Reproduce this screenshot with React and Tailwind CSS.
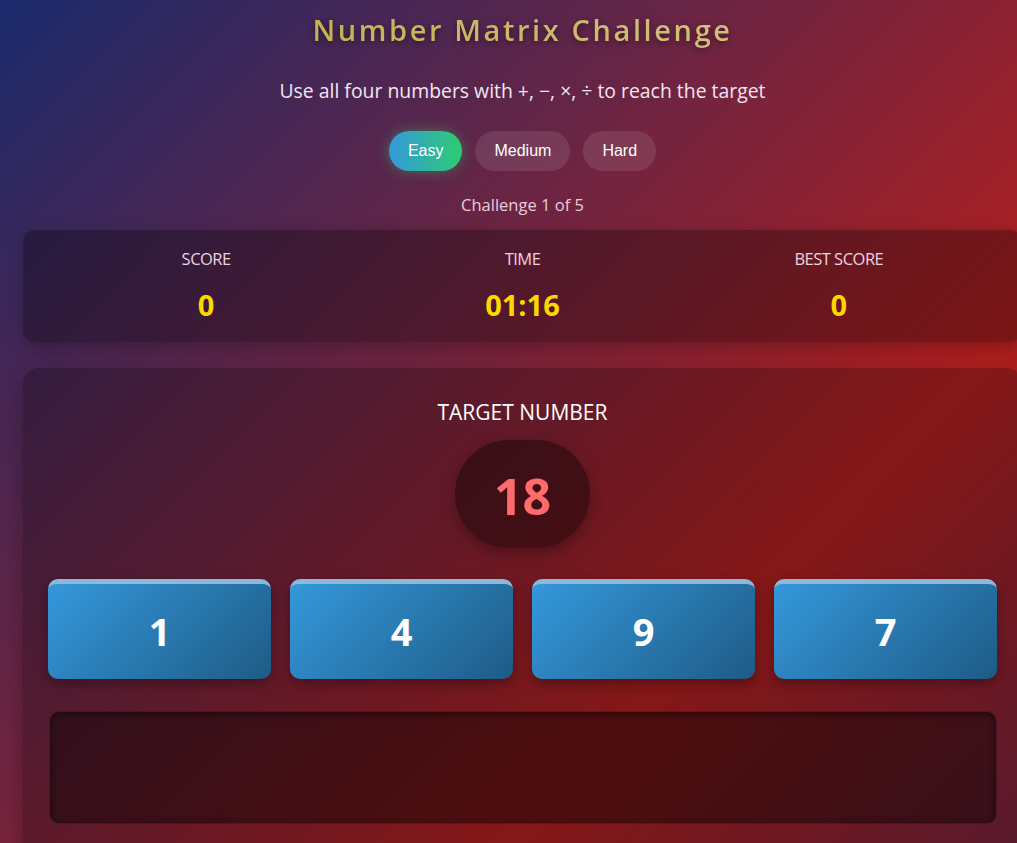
const stats = [
  { label: "SCORE", value: "0" },
  { label: "TIME", value: "01:16" },
  { label: "BEST SCORE", value: "0" },
];

const numbers = [1, 4, 9, 7];

export default function App() {
  return (
    <div className="h-screen overflow-hidden bg-[linear-gradient(135deg,#1a2a6c,#b21f1f,#1a2a6c)] bg-[length:100%_1683px] bg-no-repeat font-['Open_Sans',sans-serif] text-white">
      <div className="w-[999px] ml-[23px] pt-[10px]">
        <h1 className="text-center text-[29px] leading-[40px] font-semibold tracking-[2.6px] bg-[linear-gradient(90deg,#bfa934,#d9c79e)] bg-clip-text text-transparent drop-shadow-[0_2px_3px_rgba(0,0,0,0.45)]">
          Number Matrix Challenge
        </h1>
        <p className="mt-[27px] text-center text-[19.4px] leading-[28px] text-[#f3e6f2]">
          Use all four numbers with +, −, ×, ÷ to reach the target
        </p>

        <div className="mt-[26px] flex justify-center gap-[13px] font-['Liberation_Sans',sans-serif] text-[16px]">
          <button className="h-[40px] px-[19px] rounded-full bg-[linear-gradient(90deg,#3498db,#2ecc71)] shadow-[0_0_14px_rgba(46,204,113,0.45)]">
            Easy
          </button>
          <button className="h-[40px] px-[19px] rounded-full bg-white/10">
            Medium
          </button>
          <button className="h-[40px] px-[19px] rounded-full bg-white/10">
            Hard
          </button>
        </div>

        <p className="mt-[22px] text-center text-[16.5px] leading-[24px] text-[#e9cddc]">
          Challenge 1 of 5
        </p>

        <div className="mt-[13px] grid grid-cols-3 px-[25px] pt-[17px] pb-[19px] rounded-[12px] bg-black/30 shadow-[0_6px_18px_rgba(0,0,0,0.25)]">
          {stats.map((s) => (
            <div key={s.label} className="flex flex-col items-center">
              <span className="text-[16.5px] leading-[24px] text-[#eed2e0] tracking-[-0.5px]">
                {s.label}
              </span>
              <span className="mt-[16px] text-[29px] leading-[36px] font-bold text-[#ffd700]">
                {s.value}
              </span>
            </div>
          ))}
        </div>

        <div className="mt-[26px] px-[25px] pt-[30px] pb-[40px] rounded-[16px] bg-black/25 shadow-[0_8px_24px_rgba(0,0,0,0.3)]">
          <p className="text-center text-[21px] leading-[28px]">TARGET NUMBER</p>
          <div className="mt-[14px] mx-auto w-[135px] h-[108px] rounded-full bg-black/40 shadow-[0_5px_15px_rgba(0,0,0,0.3)] flex items-center justify-center pt-[3px]">
            <span className="text-[50px] font-bold text-[#ff6b6b] leading-none">18</span>
          </div>

          <div className="mt-[31px] grid grid-cols-4 gap-[19px]">
            {numbers.map((n) => (
              <div
                key={n}
                className="h-[100px] rounded-[10px] border-t-[5px] border-[#8cb9da] bg-[linear-gradient(135deg,#3498db,#1e5b86)] shadow-[0_5px_12px_rgba(0,0,0,0.3)] flex items-center justify-center"
              >
                <span className="text-[38px] font-bold leading-none -mt-[2px]">{n}</span>
              </div>
            ))}
          </div>

          <div className="mt-[32px] ml-[1px] h-[113px] rounded-[10px] bg-black/40 border border-white/5 shadow-[inset_0_2px_10px_rgba(0,0,0,0.5)]"></div>
        </div>
      </div>
    </div>
  );
}
